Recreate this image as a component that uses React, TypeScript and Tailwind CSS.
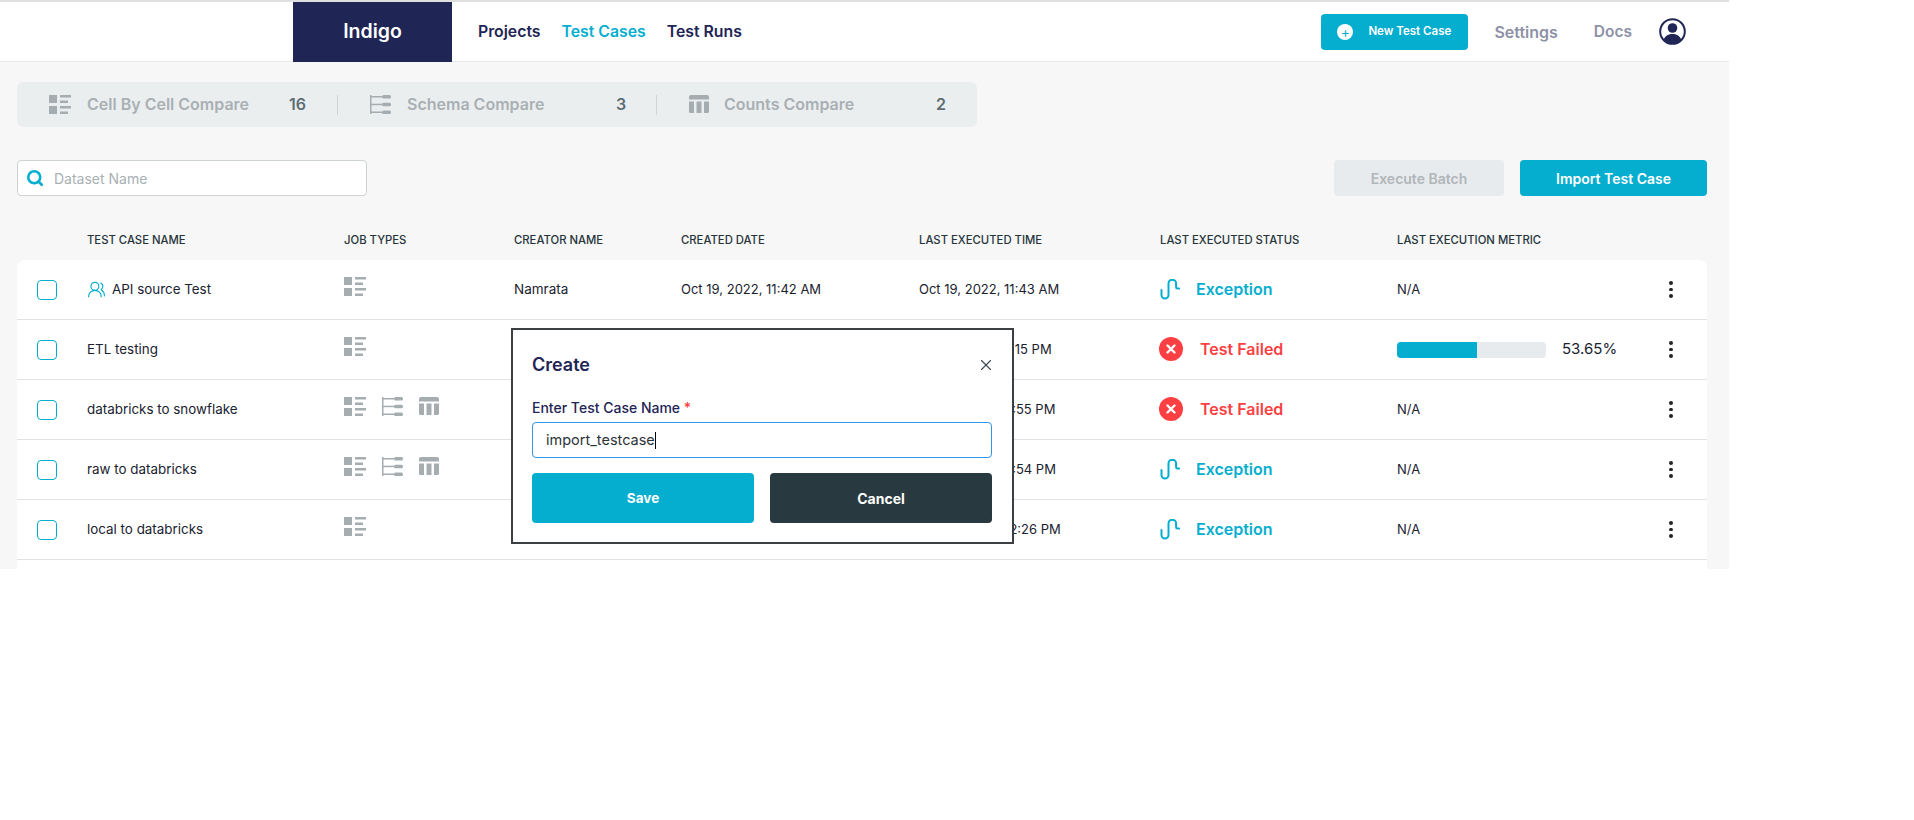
import { Search, UsersRound, X } from 'lucide-react'

const columns = 'grid grid-cols-[70px_257px_170px_167px_238px_241px_237px_249px_50px] items-center'

const rows = [
  { name: 'API source Test', shared: true, jobs: 1, creator: 'Namrata', date: 'Oct 19, 2022, 11:42 AM', last: 'Oct 19, 2022, 11:43 AM', status: 'exception', metric: 'N/A' },
  { name: 'ETL testing', jobs: 1, creator: '', date: '', last: 'Oct 18, 2022, 7:15 PM', status: 'failed', metric: '53.65%' },
  { name: 'databricks to snowflake', jobs: 3, creator: '', date: '', last: 'Oct 18, 2022, 6:55 PM', status: 'failed', metric: 'N/A' },
  { name: 'raw to databricks', jobs: 3, creator: '', date: '', last: 'Oct 18, 2022, 6:54 PM', status: 'exception', metric: 'N/A' },
  { name: 'local to databricks', jobs: 1, creator: '', date: '', last: 'Oct 18, 2022, 12:26 PM', status: 'exception', metric: 'N/A' },
]

function CellIcon({ className }: { className?: string }) {
  return (
    <svg width="22" height="19" viewBox="0 0 22 19" fill="#a6adb1" className={className}>
      <rect x="0" y="0" width="8" height="8" />
      <rect x="0" y="11" width="8" height="8" />
      <rect x="11" y="0" width="11" height="2.5" />
      <rect x="11" y="5.5" width="8" height="2.5" />
      <rect x="11" y="11" width="11" height="2.5" />
      <rect x="11" y="16.5" width="8" height="2.5" />
    </svg>
  )
}

function SchemaIcon({ className }: { className?: string }) {
  return (
    <svg width="21" height="19" viewBox="0 0 21 19" fill="#a6adb1" className={className}>
      <rect x="0" y="0" width="1.5" height="19" />
      <rect x="0" y="1" width="12" height="1.5" />
      <rect x="0" y="8.7" width="12" height="1.5" />
      <rect x="0" y="16.5" width="12" height="1.5" />
      <rect x="12" y="0" width="9" height="3.5" rx="1.5" />
      <rect x="12" y="7.7" width="9" height="3.5" rx="1.5" />
      <rect x="12" y="15.5" width="9" height="3.5" rx="1.5" />
    </svg>
  )
}

function CountsIcon({ className }: { className?: string }) {
  return (
    <svg width="20" height="19" viewBox="0 0 20 19" fill="#a6adb1" className={className}>
      <path d="M2 0h16a2 2 0 0 1 2 2v2.500H0V2a2 2 0 0 1 2-2z" />
      <path d="M0 6.500h5V18H1.500A1.500 1.500 0 0 1 0 16.500z" />
      <rect x="7.500" y="6.500" width="5" height="11.500" />
      <path d="M15 6.500h5v10a1.500 1.500 0 0 1-1.500 1.500H15z" />
    </svg>
  )
}

function ExceptionIcon() {
  return (
    <svg width="21" height="21" viewBox="0 0 21 21" fill="none" stroke="#05aecf" strokeWidth="2" strokeLinecap="round" strokeLinejoin="round">
      <path d="M1.500 11v5a3.500 3.500 0 0 0 7 0V4.500a3.800 3.800 0 0 1 7.600 0V8q0 1.500 1.500 1.500h1.500" />
    </svg>
  )
}

function FailedIcon() {
  return (
    <svg width="24" height="24" viewBox="0 0 24 24" className="-ml-px">
      <circle cx="12" cy="12" r="12" fill="#fc3f42" />
      <path d="M8.500 8.500l7 7M15.500 8.500l-7 7" stroke="#fff" strokeWidth="2.400" strokeLinecap="round" />
    </svg>
  )
}

function Avatar() {
  return (
    <svg width="27" height="27" viewBox="0 0 27 27">
      <circle cx="13.500" cy="13.500" r="12.300" fill="#fff" stroke="#1f2555" strokeWidth="2" />
      <circle cx="13.500" cy="10" r="4.800" fill="#1f2555" />
      <path d="M4.800 21.500c1.500-4 5-5.500 8.700-5.500s7.200 1.500 8.700 5.500a12 12 0 0 1-17.400 0z" fill="#1f2555" />
    </svg>
  )
}

function Kebab() {
  return (
    <div className="flex flex-col items-center gap-[3px]">
      <span className="size-[3.500px] rounded-full bg-[#222]"></span>
      <span className="size-[3.500px] rounded-full bg-[#222]"></span>
      <span className="size-[3.500px] rounded-full bg-[#222]"></span>
    </div>
  )
}

export default function App() {
  return (
    <div className="relative w-[1729px] h-[569px] overflow-hidden bg-[#f7f7f7] font-['Inter',sans-serif] text-[#1a2230]">
      <header className="flex h-[62px] items-center border-t-2 border-b border-t-[#dfdfdf] border-b-[#e8e8e8] bg-white">
        <div className="w-[293px]"></div>
        <div className="flex h-[60px] w-[159px] self-start items-center justify-center bg-[#1f2555] text-[19.500px] font-semibold text-white">Indigo</div>
        <nav className="ml-[26px] flex gap-[21px] text-[15.800px] font-semibold text-[#1f2555]">
          <span>Projects</span>
          <span className="text-[#05aecf]">Test Cases</span>
          <span>Test Runs</span>
        </nav>
        <button className="ml-auto flex h-[36px] w-[147px] items-center rounded bg-[#05aecf] pl-[16px] text-[11.500px] font-semibold text-white">
          <span className="flex size-[16px] items-center justify-center rounded-full bg-white text-[14px] font-normal leading-none text-[#05aecf]">+</span>
          <span className="ml-[15px]">New Test Case</span>
        </button>
        <span className="ml-[26px] text-[16px] font-semibold text-[#8d91a6]">Settings</span>
        <span className="ml-[36px] text-[15.500px] font-semibold text-[#8d91a6]">Docs</span>
        <div className="ml-[27px] mr-[43px]"><Avatar /></div>
      </header>

      <div className="ml-[17px] mt-[20px] flex h-[45px] w-[960px] items-center rounded-md bg-[#ebeeef] text-[16px] font-semibold text-[#a9b0b4]">
        <CellIcon className="ml-[32px]" />
        <span className="ml-[16px] w-[202px] -mt-px">Cell By Cell Compare</span>
        <span className="w-[48px] -mt-px text-[#5d6d75]">16</span>
        <span className="h-[20px] w-px bg-[#cfd4d7]"></span>
        <SchemaIcon className="ml-[32px]" />
        <span className="ml-[16px] w-[209px] -mt-px">Schema Compare</span>
        <span className="w-[40px] -mt-px text-[#5d6d75]">3</span>
        <span className="h-[20px] w-px bg-[#cfd4d7]"></span>
        <CountsIcon className="ml-[32px]" />
        <span className="ml-[15px] w-[212px] -mt-px">Counts Compare</span>
        <span className="-mt-px text-[#5d6d75]">2</span>
      </div>

      <div className="ml-[17px] mt-[33px] flex h-[36px] w-[1690px] items-center justify-between">
        <div className="flex h-[36px] w-[350px] items-center rounded border border-[#ccd1d4] bg-white pl-[8px]">
          <Search size={18} strokeWidth={3.500} className="text-[#05aecf]" />
          <span className="ml-[10px] pt-px text-[14px] text-[#a9b0b4]">Dataset Name</span>
        </div>
        <div className="flex gap-[16px]">
          <button className="h-[36px] w-[170px] rounded bg-[#e8ebed] pt-px text-[14px] font-semibold text-[#b0b6ba]">Execute Batch</button>
          <button className="h-[36px] w-[187px] rounded bg-[#05aecf] pt-px text-[14px] font-semibold text-white">Import Test Case</button>
        </div>
      </div>

      <div className={`${columns} ml-[17px] mt-[33px] mb-[9px] h-[22px] text-[11.300px] font-medium text-[#26343a]`}>
        <span></span>
        <span>TEST CASE NAME</span>
        <span>JOB TYPES</span>
        <span>CREATOR NAME</span>
        <span>CREATED DATE</span>
        <span>LAST EXECUTED TIME</span>
        <span>LAST EXECUTED STATUS</span>
        <span>LAST EXECUTION METRIC</span>
        <span></span>
      </div>

      <div className="ml-[17px] w-[1690px] rounded-t-lg bg-white pb-[20px] text-[13px] text-[#1a2230]">
        {rows.map((row) => (
          <div key={row.name} className={`${columns} h-[60px] border-b border-[#e2e2e2]`}>
            <span className="ml-[20px] size-[20px] rounded border border-[#05aecf]"></span>
            <span className="flex items-center gap-[6px] text-[13.400px]">
              {row.shared && <UsersRound size={19} strokeWidth={1.500} className="text-[#05aecf]" />}
              {row.name}
            </span>
            <span className="-mt-[6px] flex items-center">
              <CellIcon />
              {row.jobs === 3 && (
                <>
                  <SchemaIcon className="ml-[16px]" />
                  <CountsIcon className="ml-[16px]" />
                </>
              )}
            </span>
            <span className="text-[13.500px]">{row.creator}</span>
            <span>{row.date}</span>
            <span>{row.last}</span>
            {row.status === 'exception' ? (
              <span className="-mt-px flex items-center gap-[15px] text-[16px] font-semibold text-[#05aecf]">
                <ExceptionIcon />
                Exception
              </span>
            ) : (
              <span className="-mt-px flex items-center gap-[17px] text-[16px] font-semibold text-[#fc3f42]">
                <FailedIcon />
                Test Failed
              </span>
            )}
            {row.metric === 'N/A' ? (
              <span>N/A</span>
            ) : (
              <span className="flex items-center gap-[16px] text-[15px]">
                <span className="h-[16px] w-[149px] overflow-hidden rounded bg-[#e8ebed]">
                  <span className="block h-full w-[54%] bg-[#05aecf]"></span>
                </span>
                {row.metric}
              </span>
            )}
            <Kebab />
          </div>
        ))}
      </div>

      <div className="absolute left-[511px] top-[328px] w-[503px] h-[216px] border-2 border-[#3c3f41] bg-white pl-[19px] pr-[20px] pt-[21px]">
        <div className="flex items-center justify-between">
          <span className="text-[18px] font-semibold text-[#1f2555]">Create</span>
          <X size={18} strokeWidth={1.500} className="text-[#3c4650] -mr-[3px]" />
        </div>
        <div className="mt-[19px] text-[14px] font-medium text-[#1f2555]">
          Enter Test Case Name <span className="text-[#fc3f42]">*</span>
        </div>
        <div className="mt-[4px] flex h-[36px] items-center rounded border border-[#2f96e8] pl-[13px] text-[14.500px] text-[#2b3338]">
          import_testcase<span className="h-[17px] w-px bg-black"></span>
        </div>
        <div className="mt-[15px] flex gap-[16px]">
          <button className="h-[50px] flex-1 rounded bg-[#05aecf] text-[13.500px] font-bold text-white">Save</button>
          <button className="h-[50px] flex-1 rounded bg-[#283a3f] text-[14px] font-bold text-white">Cancel</button>
        </div>
      </div>
    </div>
  )
}
